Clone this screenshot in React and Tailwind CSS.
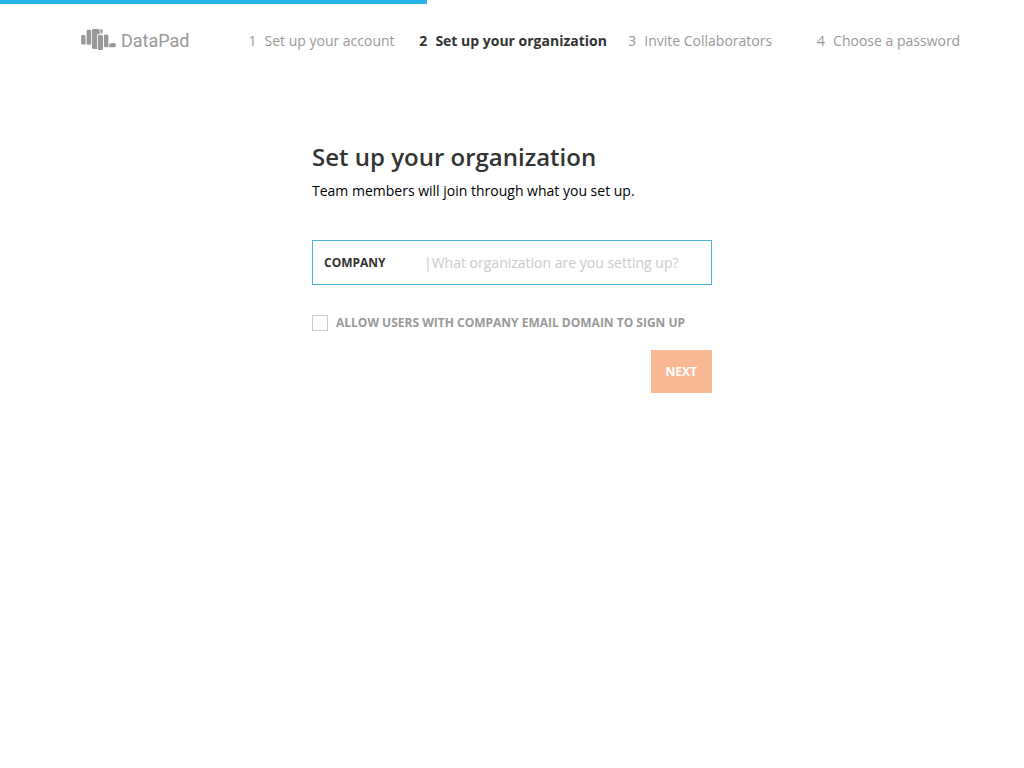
const steps = [
  'Set up your account',
  'Set up your organization',
  'Invite Collaborators',
  'Choose a password',
];

const current = 1;

function Logo() {
  return (
    <a href="#" aria-label="DataPad" className="flex items-start gap-[5px] text-[#999999]">
      <svg width="35" height="22" viewBox="0 0 35 22" fill="currentColor" aria-hidden="true">
        <rect x="0.2" y="6" width="4.3" height="9.6" rx="1.4" />
        <rect x="5.6" y="0.8" width="4.6" height="15" rx="1.4" />
        <path d="M12.6 0H17.2Q18.7 0 18.7 1.5V5.3H17.2Q16 5.3 16 6.6V20H12.6Q11 20 11 18.4V1.6Q11 0 12.6 0Z" />
        <path d="M19.5 0H20.4Q21.6 0 21.6 1.2V4.6H19.5Z" />
        <rect x="16.8" y="6.1" width="5.2" height="15" rx="1.4" />
        <path d="M24.4 5.6H25.9Q27.4 5.6 27.4 7.1V18.2H24.4Q22.9 18.2 22.9 16.7V7.1Q22.9 5.6 24.4 5.6Z" />
        <path d="M28.2 14.4Q28.6 15 29.4 14.6Q30 14 31 14H33.4Q34.8 14 34.8 15.4V16.8Q34.8 18.2 33.4 18.2H28.2Z" />
      </svg>
      <span className="font-['Roboto',sans-serif] text-lg leading-6">DataPad</span>
    </a>
  );
}

export default function App() {
  return (
    <div className="font-['Open_Sans',sans-serif] text-sm text-black">
      <div className="h-1 w-full">
        <div className="h-full w-5/12 bg-[#26b4e9]" />
      </div>

      <header className="mx-auto flex max-w-[904px] items-center gap-[59px] pt-[25px] pl-[21px]">
        <Logo />
        <nav aria-label="Setup steps" className="grow">
          <ol className="grid grid-cols-[171fr_209fr_189fr_147fr]">
            {steps.map((step, i) => (
              <li
                key={step}
                aria-current={i === current ? 'step' : undefined}
                className={
                  'flex gap-2 whitespace-nowrap leading-6 ' +
                  (i === current ? 'font-bold text-[#333333]' : 'text-[#999999]')
                }
              >
                <span>{i + 1}</span>
                <span>{step}</span>
              </li>
            ))}
          </ol>
        </nav>
      </header>

      <main className="mx-auto mt-[88px] max-w-[400px]">
        <h1 className="text-2xl font-semibold text-[#333333]">Set up your organization</h1>
        <p className="mt-2 leading-5">Team members will join through what you set up.</p>

        <form className="mt-[39px]" onSubmit={(e) => e.preventDefault()}>
          <div className="flex h-[45px] items-center border border-[#4ab3e2] px-[11px]">
            <label htmlFor="company" className="w-[100px] text-xs font-bold text-[#333333]">
              COMPANY
            </label>
            <input
              id="company"
              type="text"
              placeholder="|What organization are you setting up?"
              className="min-w-0 grow bg-transparent text-sm outline-none placeholder:text-[#cccccc]"
            />
          </div>

          <div className="mt-[30px] flex items-center gap-2">
            <input
              id="domain"
              type="checkbox"
              className="size-4 shrink-0 appearance-none border border-[#cccccc] bg-white checked:bg-[#26b4e9]"
            />
            <label htmlFor="domain" className="text-xs font-bold text-[#999999]">
              ALLOW USERS WITH COMPANY EMAIL DOMAIN TO SIGN UP
            </label>
          </div>

          <div className="mt-[19px] flex justify-end">
            <button type="submit" className="h-[43px] bg-[#fab994] px-[15px] text-xs font-bold text-white">
              NEXT
            </button>
          </div>
        </form>
      </main>
    </div>
  );
}
